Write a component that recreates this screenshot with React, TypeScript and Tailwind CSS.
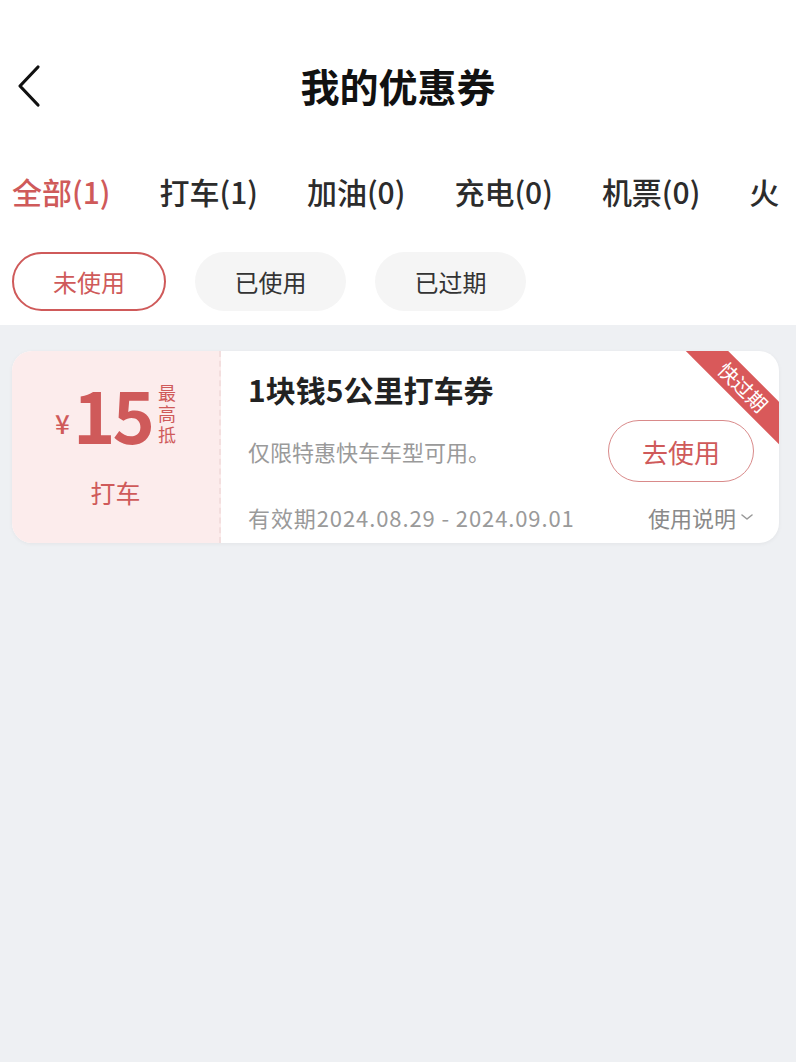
const font = { fontFamily: '"Noto Sans CJK SC", "Noto Sans", sans-serif' };

const tabs = ['全部(1)', '打车(1)', '加油(0)', '充电(0)', '机票(0)', '火车票(0)'];
const filters = ['未使用', '已使用', '已过期'];

export default function App() {
  return (
    <div className="w-[796px] h-[1062px] flex flex-col bg-[#eef0f3] overflow-hidden" style={font}>
      {/* Header */}
      <div className="bg-white">
        <div className="relative h-[168px] flex items-start justify-center pt-[66px]">
          <svg className="absolute left-[14px] top-[64px]" width="28" height="44" viewBox="0 0 28 44" fill="none">
            <path d="M24 3 L6 22 L24 41" stroke="#111" strokeWidth="3.2" strokeLinecap="round" strokeLinejoin="round" />
          </svg>
          <h1 className="text-[39px] font-bold text-[#111] leading-none">我的优惠券</h1>
        </div>

        {/* Category tabs, scrolls horizontally */}
        <div className="flex gap-[49px] pl-[12px] w-[780px] whitespace-nowrap overflow-hidden">
          {tabs.map((t, i) => (
            <span
              key={t}
              className={`text-[30px] leading-[46px] font-medium ${i === 0 ? 'text-[#cf5a5a]' : 'text-[#2c2c2c]'}`}
            >
              {t}
            </span>
          ))}
        </div>

        {/* Status filters */}
        <div className="flex gap-[29px] pl-[12px] pt-[38px] pb-[14px]">
          {filters.map((f, i) => (
            <div
              key={f}
              className={`h-[59px] rounded-full flex items-center justify-center text-[24px] ${
                i === 0
                  ? 'border-2 border-[#cf5a5a] text-[#cf5a5a] bg-white w-[154px]'
                  : 'bg-[#f5f5f5] text-[#333] w-[151px]'
              }`}
            >
              {f}
            </div>
          ))}
        </div>
      </div>

      {/* Coupon list */}
      <div className="px-[12px] pt-[26px]">
        <div className="relative flex h-[192px] bg-white rounded-[20px] overflow-hidden shadow-[0_1px_4px_rgba(0,0,0,0.05)] w-[767px]">
          {/* amount */}
          <div className="w-[209px] bg-[#fcecec] flex flex-col items-center border-r-2 border-dashed border-[#f3dede]">
            <div className="flex items-center mt-[27px] h-[70px]">
              <span className="text-[26px] text-[#cf5a5a] font-medium mt-[18px] mr-[3px]">¥</span>
              <span className="text-[72px] font-bold text-[#cf5a5a] leading-none tracking-[-3px]">15</span>
              <span className="w-[18px] text-[18px] leading-[21px] text-[#cf5a5a] ml-[6px] break-all">最高抵</span>
            </div>
            <span className="text-[25px] text-[#cf5a5a] mt-[32px] leading-none">打车</span>
          </div>

          {/* details */}
          <div className="flex-1 flex flex-col pl-[27px] pr-[25px] pt-[23px]">
            <span className="text-[30px] font-semibold text-[#222] leading-none">1块钱5公里打车券</span>
            <div className="flex items-center justify-between mt-[16px]">
              <span className="text-[22px] text-[#9a9a9a]">仅限特惠快车车型可用。</span>
              <div className="w-[146px] h-[62px] rounded-full border border-[#d98a8a] flex items-center justify-center text-[26px] text-[#cf5a5a]">
                去使用
              </div>
            </div>
            <div className="flex items-center justify-between mt-[24px]">
              <span className="text-[22px] text-[#9a9a9a] leading-none tracking-[0.9px]">有效期2024.08.29 - 2024.09.01</span>
              <span className="flex items-center gap-[4px] text-[22px] text-[#8a8a8a] leading-none">
                使用说明
                <svg width="14" height="10" viewBox="0 0 14 10" fill="none">
                  <path d="M2 3 L7 7 L12 3" stroke="#999" strokeWidth="1.6" strokeLinecap="round" strokeLinejoin="round" />
                </svg>
              </span>
            </div>
          </div>

          {/* ribbon */}
          <div className="absolute top-[21px] right-[-34px] w-[140px] h-[30px] rotate-45 bg-[#d9595a] flex items-center justify-center text-white text-[20px] leading-none">
            快过期
          </div>
        </div>
      </div>
    </div>
  );
}
